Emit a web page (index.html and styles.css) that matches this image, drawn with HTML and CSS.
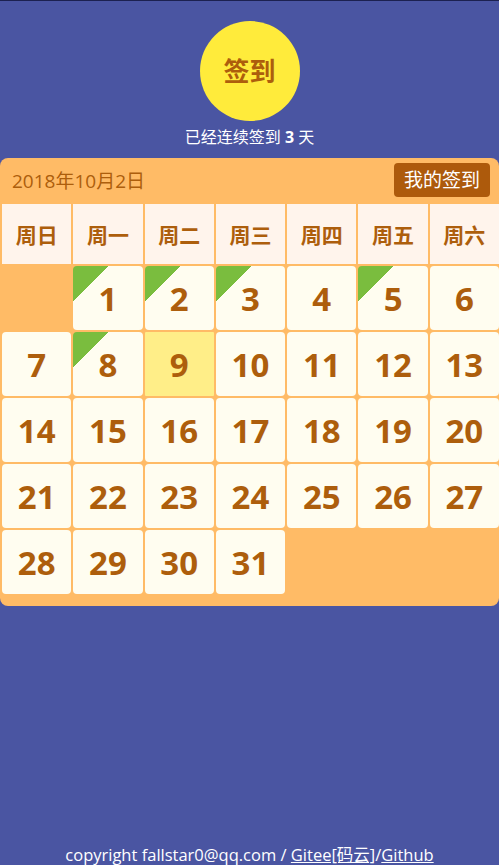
FILE: index.html
```html
<!DOCTYPE html>
<html lang="zh">
<head>
    <meta charset="UTF-8">
    <meta name="viewport" content="width=device-width, initial-scale=1.0">
    <title>签到</title>
    <link rel="stylesheet" href="styles.css">
</head>
<body>
    <div class="top">
        <div class="sign-btn">签到</div>
        <div class="streak">已经连续签到 <b>3</b> 天</div>
    </div>
    <div class="calendar">
        <div class="cal-head">
            <span class="cal-date">2018年10月2日</span>
            <span class="my-sign">我的签到</span>
        </div>
        <div class="cal-grid">
            <div class="week">周日</div>
            <div class="week">周一</div>
            <div class="week">周二</div>
            <div class="week">周三</div>
            <div class="week">周四</div>
            <div class="week">周五</div>
            <div class="week">周六</div>

            <div class="empty"></div>
            <div class="day signed">1</div>
            <div class="day signed">2</div>
            <div class="day signed">3</div>
            <div class="day">4</div>
            <div class="day signed">5</div>
            <div class="day">6</div>

            <div class="day">7</div>
            <div class="day signed">8</div>
            <div class="day today">9</div>
            <div class="day">10</div>
            <div class="day">11</div>
            <div class="day">12</div>
            <div class="day">13</div>

            <div class="day">14</div>
            <div class="day">15</div>
            <div class="day">16</div>
            <div class="day">17</div>
            <div class="day">18</div>
            <div class="day">19</div>
            <div class="day">20</div>

            <div class="day">21</div>
            <div class="day">22</div>
            <div class="day">23</div>
            <div class="day">24</div>
            <div class="day">25</div>
            <div class="day">26</div>
            <div class="day">27</div>

            <div class="day">28</div>
            <div class="day">29</div>
            <div class="day">30</div>
            <div class="day">31</div>
        </div>
    </div>
    <div class="footer">
        copyright fallstar0@qq.com / <a href="#">Gitee[码云]</a>/<a href="#">Github</a>
    </div>
</body>
</html>
```

FILE: styles.css
```css
html, body {
    height: 100%;
}
body {
    margin: 0;
    box-sizing: border-box;
    border-top: 1px solid #1c2150;
    background-color: #4a55a2;
    font-family: "Open Sans", "Noto Sans CJK SC", sans-serif;
    display: flex;
    flex-direction: column;
    overflow: hidden;
}
.top {
    padding-top: 20px;
    text-align: center;
}
.sign-btn {
    width: 100px;
    height: 100px;
    margin: 0 auto;
    border-radius: 50%;
    background-color: #ffeb3b;
    color: #ad5e0c;
    font-size: 26px;
    font-weight: bold;
    line-height: 100px;
}
.streak {
    margin-top: 6px;
    color: #fff;
    font-size: 16px;
    line-height: 20px;
}
.calendar {
    margin-top: 11px;
    background-color: #ffbb66;
    border-radius: 8px;
}
.cal-head {
    height: 46px;
    display: flex;
    align-items: flex-start;
    justify-content: space-between;
    padding: 0 9px 0 12px;
}
.cal-date {
    margin-top: 10px;
    color: #ad5e0c;
    font-size: 19px;
    line-height: 26px;
}
.my-sign {
    margin-top: 5px;
    height: 34px;
    line-height: 34px;
    padding: 0 10px;
    border-radius: 4px;
    background-color: #ad5a0c;
    color: #fff;
    font-size: 19px;
}
.cal-grid {
    display: grid;
    grid-template-columns: repeat(7, 1fr);
    grid-auto-rows: 64px;
    grid-template-rows: 60px;
    gap: 2px;
    padding: 0 0 12px 2px;
}
.week {
    background-color: #fff4ec;
    color: #ad5e0c;
    font-size: 21px;
    font-weight: bold;
    display: flex;
    align-items: center;
    justify-content: center;
}
.day {
    background-color: #fffdf0;
    border-radius: 4px;
    color: #ad5e0c;
    font-size: 33px;
    font-weight: bold;
    display: flex;
    align-items: center;
    justify-content: center;
}
.signed {
    background-image: linear-gradient(135deg, #7abd3e 25px, transparent 25px);
}
.today {
    background-color: #ffee88;
    border-radius: 1px;
}
.footer {
    margin-top: auto;
    text-align: center;
    color: #fff;
    font-size: 16.5px;
    line-height: 20px;
}
.footer a {
    color: #fff;
}
```
